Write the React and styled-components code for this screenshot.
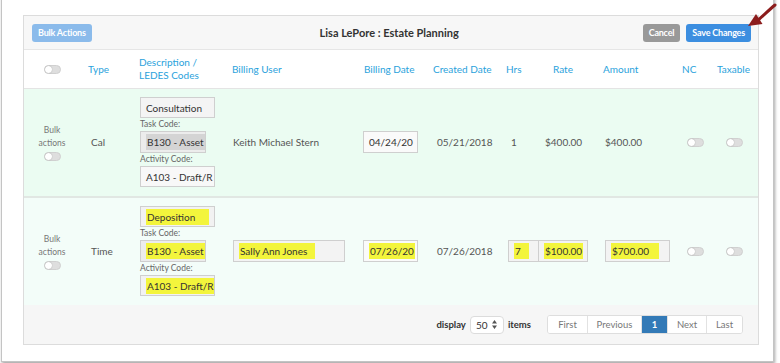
import React from 'react';
import styled, { createGlobalStyle } from 'styled-components';

const Global = createGlobalStyle`
  html, body { margin: 0; padding: 0; background: #fff; }
  body { font-family: Lato, "Open Sans", sans-serif; color: #333; overflow: hidden; }
  * { box-sizing: border-box; }
`;

const cols = '56px 51px 93px 132px 69px 73px 40px 57px 79px 35px 1fr';

const Page = styled.div`
  position: relative;
  width: 780px;
  height: 363px;
  padding-top: 1px;
`;

const Frame = styled.div`
  margin-top: -6px;
  margin-left: 1px;
  width: 773px;
  height: 367px;
  border: 1px solid #c4c4c4;
  box-shadow: 1px 2px 3px rgba(0, 0, 0, 0.35);
  padding: 19px 0 0 21px;
  background: #fff;
`;

const Panel = styled.div`
  width: 736px;
  border: 1px solid #dcdcdc;
  background: #fff;
`;

const TopBar = styled.div`
  height: 34px;
  padding: 0 7px 0 8px;
  display: flex;
  align-items: center;
  justify-content: space-between;
  background: #f7f7f7;
  border-bottom: 1px solid #e6e6e6;
`;

const Title = styled.div`
  font-size: 11px;
  font-weight: 700;
  color: #333;
  margin-left: 44px;
`;

const Actions = styled.div`
  display: flex;
  gap: 6px;
`;

const Btn = styled.div`
  height: 18px;
  padding: 0 6px;
  display: flex;
  align-items: center;
  border-radius: 3px;
  font-size: 9px;
  font-weight: 700;
  color: #fff;
  letter-spacing: -0.2px;
  background: ${p => p.$bg};
`;

const HeadRow = styled.div`
  display: grid;
  grid-template-columns: ${cols};
  height: 39px;
  align-items: center;
  border-bottom: 1px solid #e4e4e4;
`;

const HeadCell = styled.div`
  padding-left: ${p => p.$pl ?? 8}px;
  font-size: 10px;
  line-height: 13px;
  color: #2aa2dc;
  display: flex;
  justify-content: ${p => (p.$center ? 'center' : 'flex-start')};
`;

const Row = styled.div`
  display: grid;
  grid-template-columns: ${cols};
  align-items: center;
  padding: 8px 0 9px;
  background: ${p => p.$bg};
  border-bottom: ${p => (p.$line ? '2px solid #e1e7e3' : 'none')};
`;

const Cell = styled.div`
  padding-left: ${p => p.$pl ?? 8}px;
  font-size: 10px;
  color: #555;
  white-space: nowrap;
  display: flex;
  flex-direction: column;
  align-items: ${p => (p.$center ? 'center' : 'flex-start')};
`;

const Field = styled.div`
  width: ${p => p.$w}px;
  height: ${p => p.$h ?? 22}px;
  padding: 0 5px;
  border: 1px solid #cfcfcf;
  background: ${p => p.$bg || '#f3f3f3'};
  display: flex;
  align-items: center;
  overflow: hidden;
  white-space: nowrap;
  font-size: 10px;
  color: #333;
`;

const Mark = styled.span`
  background: ${p => (p.$grey ? '#d4d4d4' : '#f3f53c')};
  padding: 2px 1px;
  padding-right: ${p => p.$pr ?? 1}px;
`;

const Label = styled.div`
  font-size: 8.5px;
  color: #666;
  height: 13px;
  line-height: 13px;
`;

const BulkText = styled.div`
  font-size: 8.5px;
  line-height: 13px;
  color: #777;
  text-align: center;
  margin-bottom: 2px;
`;

const ToggleTrack = styled.div`
  width: 17px;
  height: 9px;
  border-radius: 5px;
  background: #dedede;
  border: 1px solid #d0d0d0;
  position: relative;
  &::after {
    content: '';
    position: absolute;
    left: 0;
    top: 0;
    width: 7px;
    height: 7px;
    border-radius: 50%;
    background: #fff;
    box-shadow: 0 0 1px rgba(0, 0, 0, 0.4);
  }
`;

const Footer = styled.div`
  height: 39px;
  background: #f6f6f6;
  display: flex;
  align-items: center;
  justify-content: flex-end;
  padding-right: 15px;
  font-size: 10px;
`;

const Dim = styled.span`
  color: #333;
  font-weight: 700;
  font-size: 9.5px;
`;

const Select = styled.div`
  width: 34px;
  height: 18px;
  margin: 0 4px;
  border: 1px solid #dcdcdc;
  border-radius: 4px;
  background: #fff;
  display: flex;
  align-items: center;
  justify-content: space-between;
  padding: 0 6px 0 5px;
  font-size: 10px;
  color: #333;
`;

const Pager = styled.div`
  display: flex;
  margin-left: 16px;
  height: 19px;
  border: 1px solid #dedede;
  border-radius: 3px;
  overflow: hidden;
  background: #fff;
`;

const PageLink = styled.div`
  width: ${p => p.$w}px;
  display: flex;
  align-items: center;
  justify-content: center;
  font-size: 9.5px;
  color: ${p => (p.$on ? '#fff' : '#777')};
  font-weight: ${p => (p.$on ? 700 : 400)};
  background: ${p => (p.$on ? '#337ab7' : '#fff')};
  border-left: ${p => (p.$first ? 'none' : '1px solid #e2e2e2')};
`;

const Arrow = styled.svg`
  position: absolute;
  left: 740px;
  top: 0;
`;

function Toggle() {
  return <ToggleTrack />;
}

function Bulk() {
  return (
    <Cell $pl={0} $center>
      <BulkText>Bulk<br />actions</BulkText>
      <Toggle />
    </Cell>
  );
}

function Codes({ hl }) {
  return (
    <Cell $pl={9}>
      <Field $w={75} $h={21} $bg={hl ? '#f2f2f2' : '#f4f4f4'}>
        {hl ? <Mark $pr={14}>Deposition</Mark> : 'Consultation'}
      </Field>
      <Label>Task Code:</Label>
      <Field $w={66} $bg="#ececec">
        {hl ? <Mark>B130 - Asset</Mark> : <Mark $grey>B130 - Asset</Mark>}
      </Field>
      <Label>Activity Code:</Label>
      <Field $w={75} $h={21} $bg={hl ? '#f2f2f2' : '#f8f8f8'}>
        {hl ? <Mark>A103 - Draft/R</Mark> : 'A103 - Draft/R'}
      </Field>
    </Cell>
  );
}

export default function App() {
  return (
    <Page>
      <Global />
      <Frame>
        <Panel>
          <TopBar>
            <Btn $bg="#8bbbeb">Bulk Actions</Btn>
            <Title>Lisa LePore : Estate Planning</Title>
            <Actions>
              <Btn $bg="#999">Cancel</Btn>
              <Btn $bg="#3c8ee0">Save Changes</Btn>
            </Actions>
          </TopBar>

          <HeadRow>
            <HeadCell $pl={0} $center><Toggle /></HeadCell>
            <HeadCell>Type</HeadCell>
            <HeadCell>Description /<br />LEDES Codes</HeadCell>
            <HeadCell>Billing User</HeadCell>
            <HeadCell>Billing Date</HeadCell>
            <HeadCell>Created Date</HeadCell>
            <HeadCell>Hrs</HeadCell>
            <HeadCell $pl={15}>Rate</HeadCell>
            <HeadCell>Amount</HeadCell>
            <HeadCell>NC</HeadCell>
            <HeadCell>Taxable</HeadCell>
          </HeadRow>

          <Row $bg="#ebfcf2" $line>
            <Bulk />
            <Cell $pl={11}>Cal</Cell>
            <Codes />
            <Cell $pl={9}>Keith Michael Stern</Cell>
            <Cell $pl={7}>
              <Field $w={55} $bg="#fafafa">04/24/20</Field>
            </Cell>
            <Cell $pl={12}>05/21/2018</Cell>
            <Cell $pl={13}>1</Cell>
            <Cell $pl={7}>$400.00</Cell>
            <Cell $pl={10}>$400.00</Cell>
            <Cell $pl={13}><Toggle /></Cell>
            <Cell $pl={17}><Toggle /></Cell>
          </Row>

          <Row $bg="#f3fdf9">
            <Bulk />
            <Cell $pl={11}>Time</Cell>
            <Codes hl />
            <Cell $pl={9}>
              <Field $w={112}><Mark $pr={8}>Sally Ann Jones</Mark></Field>
            </Cell>
            <Cell $pl={7}>
              <Field $w={55} $bg="#fafafa"><Mark>07/26/20</Mark></Field>
            </Cell>
            <Cell $pl={12}>07/26/2018</Cell>
            <Cell $pl={10}>
              <Field $w={31}><Mark $pr={8}>7</Mark></Field>
            </Cell>
            <Cell $pl={0}>
              <Field $w={50}><Mark>$100.00</Mark></Field>
            </Cell>
            <Cell $pl={10}>
              <Field $w={65}><Mark $pr={10}>$700.00</Mark></Field>
            </Cell>
            <Cell $pl={13}><Toggle /></Cell>
            <Cell $pl={17}><Toggle /></Cell>
          </Row>

          <Footer>
            <Dim>display</Dim>
            <Select>
              <span>50</span>
              <svg width="5" height="9" viewBox="0 0 5 9">
                <path d="M2.5 0 L5 3.5 L0 3.5 Z M2.5 9 L5 5.5 L0 5.5 Z" fill="#555" />
              </svg>
            </Select>
            <Dim>items</Dim>
            <Pager>
              <PageLink $w={39} $first>First</PageLink>
              <PageLink $w={54}>Previous</PageLink>
              <PageLink $w={26} $on>1</PageLink>
              <PageLink $w={39}>Next</PageLink>
              <PageLink $w={36}>Last</PageLink>
            </Pager>
          </Footer>
        </Panel>
      </Frame>
      <Arrow width="40" height="32" viewBox="0 0 40 32">
        <path d="M19 19.3 C 24 15, 29 10, 35 5" stroke="#8c1c1c" strokeWidth="3" fill="none" strokeLinecap="round" />
        <path d="M8 26 L16 14 L22.5 24 Z" fill="#8c1c1c" />
      </Arrow>
    </Page>
  );
}
